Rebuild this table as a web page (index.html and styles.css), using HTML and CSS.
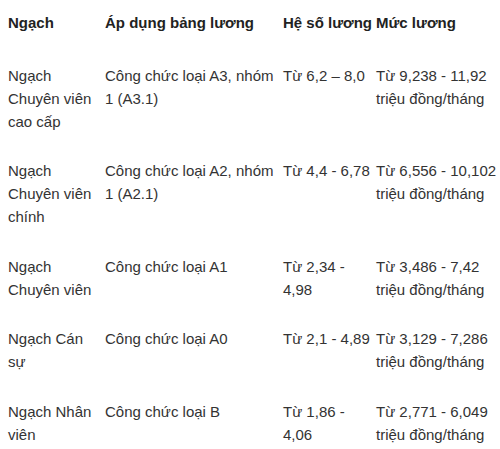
FILE: index.html
```html
<!DOCTYPE html>
<html lang="vi">
<head>
<meta charset="utf-8">
<link rel="stylesheet" href="styles.css">
</head>
<body>
<table class="salary">
  <colgroup>
    <col class="c1"><col class="c2"><col class="c3"><col class="c4">
  </colgroup>
  <thead>
    <tr><th>Ngạch</th><th>Áp dụng bảng lương</th><th>Hệ số lương</th><th>Mức lương</th></tr>
  </thead>
  <tbody>
    <tr><td>Ngạch Chuyên viên cao cấp</td><td>Công chức loại A3, nhóm 1 (A3.1)</td><td>Từ 6,2 – 8,0</td><td>Từ 9,238 - 11,92 triệu đồng/tháng</td></tr>
    <tr><td>Ngạch Chuyên viên chính</td><td>Công chức loại A2, nhóm 1 (A2.1)</td><td>Từ 4,4 - 6,78</td><td>Từ 6,556 - 10,102 triệu đồng/tháng</td></tr>
    <tr><td>Ngạch Chuyên viên</td><td>Công chức loại A1</td><td>Từ 2,34 - 4,98</td><td>Từ 3,486 - 7,42 triệu đồng/tháng</td></tr>
    <tr><td>Ngạch Cán sự</td><td>Công chức loại A0</td><td>Từ 2,1 - 4,89</td><td>Từ 3,129 - 7,286 triệu đồng/tháng</td></tr>
    <tr><td>Ngạch Nhân viên</td><td>Công chức loại B</td><td>Từ 1,86 - 4,06</td><td>Từ 2,771 - 6,049 triệu đồng/tháng</td></tr>
  </tbody>
</table>
</body>
</html>
```
FILE: styles.css
```css
html, body {
  margin: 0;
  padding: 0;
  background: #ffffff;
}
body {
  font-family: "Liberation Sans", Arial, sans-serif;
  font-size: 15px;
  line-height: 23px;
  color: #333333;
}
.salary {
  margin-left: 8px;
  border-collapse: collapse;
  table-layout: fixed;
  width: 492px;
}
.c1 { width: 97px; }
.c2 { width: 178px; }
.c3 { width: 93px; }
.c4 { width: 124px; }
.salary th,
.salary td {
  padding: 0;
  text-align: left;
  vertical-align: top;
}
.salary th {
  font-weight: bold;
  color: #222222;
  padding-top: 10.5px;
  padding-bottom: 17px;
  white-space: nowrap;
}
.salary td {
  padding-top: 13px;
  padding-bottom: 13.5px;
}
.salary td:first-child {
  padding-right: 6px;
}
```
